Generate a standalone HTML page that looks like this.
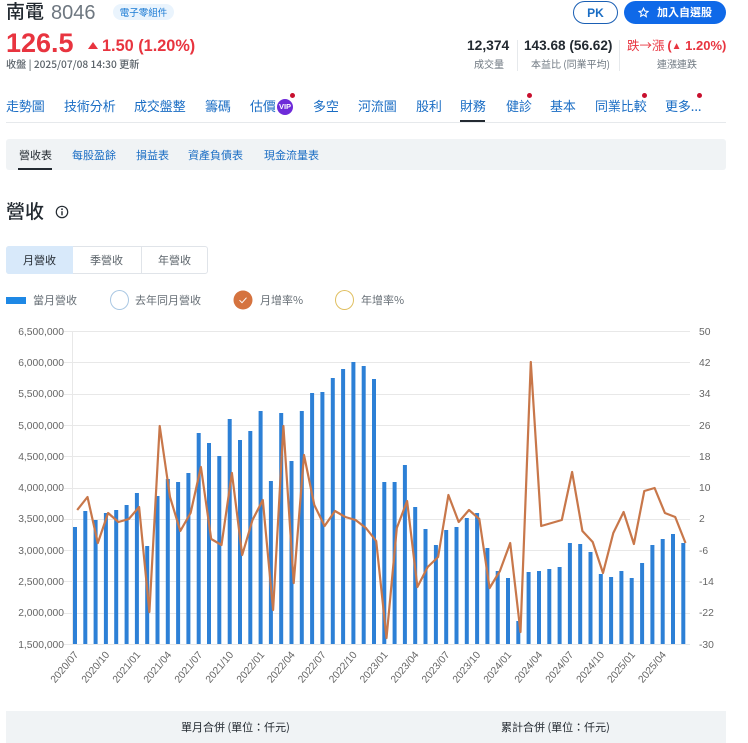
<!DOCTYPE html>
<html lang="zh-Hant"><head><meta charset="utf-8"><title>南電 8046</title>
<style>
html,body{margin:0;padding:0;background:#fff}
body{width:748px;height:743px;position:relative;overflow:hidden;font-family:"Liberation Sans","Noto Sans CJK TC",sans-serif;color:#232a31}
.a{position:absolute;white-space:nowrap;line-height:1}
.c{font-family:"Noto Sans CJK TC",sans-serif}
.n{font-size:13px;color:#1a6dc4;top:99px;font-family:"Noto Sans CJK TC",sans-serif;letter-spacing:-.1px}
.s{font-size:11px;color:#1a6dc4;top:150px;font-family:"Noto Sans CJK TC",sans-serif}
.dot{position:absolute;width:5px;height:5px;border-radius:50%;background:#c8102e;top:93px}
.l{font-size:10px;color:#6e7780;top:59px;font-family:"Noto Sans CJK TC",sans-serif}
.lg{font-size:11px;color:#666e75;top:295px;font-family:"Noto Sans CJK TC",sans-serif}
svg text{font-family:"Liberation Sans",sans-serif;font-size:10.3px;fill:#666}
</style></head><body>
<div class="a c" style="left:6px;top:1px;font-size:19px;font-weight:500">南電</div>
<div class="a" style="left:51px;top:3px;font-size:20px;color:#6e7780">8046</div>
<div class="a c" style="left:113px;top:4px;width:61px;height:16px;border-radius:8px;background:#eaf4fd;color:#1a7ad4;font-size:9.5px;line-height:16px;text-align:center">電子零組件</div>
<div class="a" style="left:6px;top:30px;font-size:27px;font-weight:700;color:#e8343f">126.5</div>
<svg class="a" style="left:88px;top:42px" width="10" height="7"><path d="M5 0L10 7H0z" fill="#e8343f"/></svg>
<div class="a" style="left:102px;top:38px;font-size:16.3px;font-weight:700;color:#e8343f">1.50 (1.20%)</div>
<div class="a c" style="left:6px;top:59px;font-size:10.2px;font-weight:500;color:#5b636a">收盤 | 2025/07/08 14:30 更新</div>

<div class="a" style="left:573px;top:1px;width:43px;height:21px;border:1px solid #1a5fb4;border-radius:12px;text-align:center;line-height:22px;font-size:12px;font-weight:700;color:#1a6dc4">PK</div>
<div class="a" style="left:624px;top:1px;width:102px;height:23px;border-radius:12px;background:#0f69e8"></div>
<svg class="a" style="left:638px;top:7px" width="11" height="11" viewBox="0 0 24 24"><path d="M12 2.5l2.9 6.3 6.9.8-5.1 4.7 1.4 6.8L12 17l-6.1 3.4 1.4-6.8L2.2 9.6l6.9-.8z" fill="none" stroke="#fff" stroke-width="2.4"/></svg>
<div class="a c" style="left:657px;top:7px;font-size:11px;font-weight:700;color:#fff">加入自選股</div>

<div class="a" style="left:467px;top:39px;font-size:13.8px;font-weight:700">12,374</div>
<div class="a l" style="left:474px">成交量</div>
<div class="a" style="left:517px;top:40px;width:1px;height:31px;background:#e6e9ec"></div>
<div class="a" style="left:524px;top:39px;font-size:13.6px;font-weight:700">143.68 (56.62)</div>
<div class="a l" style="left:531px">本益比 (同業平均)</div>
<div class="a" style="left:619px;top:40px;width:1px;height:31px;background:#e6e9ec"></div>
<div class="a c" style="left:627px;top:39px;font-size:12.5px;color:#e8343f">跌→漲 <b style="font-family:'Liberation Sans','Noto Sans CJK TC',sans-serif;font-size:13px">(<span style="font-size:10px;vertical-align:1px">▲</span> 1.20%)</b></div>
<div class="a l" style="left:657px">連漲連跌</div>

<div class="a n" style="left:6px">走勢圖</div>
<div class="a n" style="left:64px">技術分析</div>
<div class="a n" style="left:134px">成交盤整</div>
<div class="a n" style="left:205px">籌碼</div>
<div class="a n" style="left:250px">估價</div>
<div class="a" style="left:277px;top:99px;width:16px;height:16px;border-radius:50%;background:#6e2bd9;color:#fff;font-size:7.5px;font-weight:700;line-height:16px;text-align:center">VIP</div>
<div class="dot" style="left:290px"></div>
<div class="a n" style="left:313px">多空</div>
<div class="a n" style="left:358px">河流圖</div>
<div class="a n" style="left:416px">股利</div>
<div class="a n" style="left:460px;color:#1a6dc4">財務</div>
<div class="a n" style="left:506px">健診</div><div class="dot" style="left:527px"></div>
<div class="a n" style="left:550px">基本</div>
<div class="a n" style="left:595px">同業比較</div><div class="dot" style="left:642px"></div>
<div class="a n" style="left:665px">更多...</div><div class="dot" style="left:697px"></div>
<div class="a" style="left:6px;top:122px;width:720px;height:1px;background:#e6e9ec"></div>
<div class="a" style="left:460px;top:120px;width:25px;height:2px;background:#232a31"></div>

<div class="a" style="left:6px;top:139px;width:720px;height:31px;background:#f0f3f5;border-radius:3px"></div>
<div class="a s" style="left:19px;color:#232a31">營收表</div>
<div class="a" style="left:18px;top:168px;width:34px;height:2px;background:#232a31"></div>
<div class="a s" style="left:72px">每股盈餘</div>
<div class="a s" style="left:136px">損益表</div>
<div class="a s" style="left:188px">資產負債表</div>
<div class="a s" style="left:264px">現金流量表</div>

<div class="a c" style="left:6px;top:201px;font-size:19px;font-weight:500">營收</div>
<svg class="a" style="left:55px;top:205px" width="14" height="14" viewBox="0 0 14 14"><circle cx="7" cy="7" r="5.7" fill="none" stroke="#232a31" stroke-width="1.2"/><path d="M7 6.2V10.3" stroke="#232a31" stroke-width="1.4"/><circle cx="7" cy="4.2" r=".9" fill="#232a31"/></svg>

<div class="a" style="left:6px;top:246px;width:200px;height:26px;border:1px solid #e0e4e9;border-radius:3px"></div>
<div class="a" style="left:6px;top:246px;width:67px;height:28px;background:#d8e9fa;border-radius:3px 0 0 3px"></div>
<div class="a" style="left:141px;top:247px;width:1px;height:26px;background:#e0e4e9"></div>
<div class="a c" style="left:23px;top:255px;font-size:11px;color:#232a31">月營收</div>
<div class="a c" style="left:90px;top:255px;font-size:11px;color:#5b636a">季營收</div>
<div class="a c" style="left:158px;top:255px;font-size:11px;color:#5b636a">年營收</div>

<div class="a" style="left:6px;top:297px;width:20px;height:7px;background:#1e88e5"></div>
<div class="a lg" style="left:33px">當月營收</div>
<div class="a" style="left:110px;top:290px;width:17px;height:18px;border:1px solid #a9c7e3;border-radius:50%"></div>
<div class="a lg" style="left:135px">去年同月營收</div>
<svg class="a" style="left:233px;top:290px" width="20" height="20" viewBox="0 0 20 20"><circle cx="10" cy="10" r="9.5" fill="#d5733f"/><path d="M6.5 10.2l2.5 2.5 4.5-5" fill="none" stroke="#fff" stroke-width="1"/></svg>
<div class="a lg" style="left:260px">月增率%</div>
<div class="a" style="left:335px;top:290px;width:17px;height:18px;border:1px solid #e0bf60;border-radius:50%"></div>
<div class="a lg" style="left:361px">年增率%</div>

<svg class="a" style="left:0;top:320px;overflow:visible" width="748" height="380" viewBox="0 320 748 380">
<path d="M64 331.5H690M64 362.5H690M64 394.5H690M64 425.5H690M64 456.5H690M64 488.5H690M64 519.5H690M64 550.5H690M64 581.5H690M64 613.5H690M64 644.5H690M72.5 331V645" stroke="#e8e8e8" fill="none"/>
<path fill="#2d80d6" d="M73 527h4V644h-4zM83.3 511h4V644h-4zM93.6 520h4V644h-4zM103.9 513h4V644h-4zM114.2 510h4V644h-4zM124.6 505h4V644h-4zM134.9 493h4V644h-4zM145.2 546h4V644h-4zM155.5 496h4V644h-4zM165.8 479h4V644h-4zM176.1 482h4V644h-4zM186.4 473h4V644h-4zM196.7 433h4V644h-4zM207 443h4V644h-4zM217.3 456h4V644h-4zM227.7 419h4V644h-4zM238 440h4V644h-4zM248.3 431h4V644h-4zM258.6 411h4V644h-4zM268.9 481h4V644h-4zM279.2 413h4V644h-4zM289.5 461h4V644h-4zM299.8 411h4V644h-4zM310.1 393h4V644h-4zM320.4 392h4V644h-4zM330.8 378h4V644h-4zM341.1 369h4V644h-4zM351.4 362h4V644h-4zM361.7 366h4V644h-4zM372 379h4V644h-4zM382.3 482h4V644h-4zM392.6 482h4V644h-4zM402.9 465h4V644h-4zM413.2 507h4V644h-4zM423.5 529h4V644h-4zM433.9 545h4V644h-4zM444.2 530h4V644h-4zM454.5 527h4V644h-4zM464.8 518h4V644h-4zM475.1 513h4V644h-4zM485.4 548h4V644h-4zM495.7 571h4V644h-4zM506 578h4V644h-4zM516.3 621h4V644h-4zM526.6 572h4V644h-4zM537 571h4V644h-4zM547.3 569h4V644h-4zM557.6 567h4V644h-4zM567.9 543h4V644h-4zM578.2 544h4V644h-4zM588.5 552h4V644h-4zM598.8 574h4V644h-4zM609.1 577h4V644h-4zM619.4 571h4V644h-4zM629.7 578h4V644h-4zM640.1 563h4V644h-4zM650.4 545h4V644h-4zM660.7 539h4V644h-4zM671 534h4V644h-4zM681.3 543h4V644h-4z"/>
<polyline fill="none" stroke="#c8774a" stroke-width="2.2" stroke-linejoin="round" points="77.2,510 87.5,497 97.8,543 108.1,513 118.4,522 128.8,519 139.1,507 149.4,612 159.7,426 170,497 180.3,531 190.6,513 200.9,467 211.2,539 221.5,545 231.9,473 242.2,555 252.5,520 262.8,500 273.1,610 283.4,426 293.7,583 304,455 314.3,505 324.6,526 335,511 345.3,517 355.6,520 365.9,528 376.2,541 386.5,638 396.8,528 407.1,501 417.4,587 427.7,567 438.1,557 448.4,495 458.7,522 469,510 479.3,519 489.6,588 499.9,571 510.2,543 520.5,632 530.8,362 541.2,526 551.5,523 561.8,520 572.1,472 582.4,531 592.7,542 603,573 613.3,533 623.6,512 633.9,544 644.3,491 654.6,488 664.9,513 675.2,517 685.5,543"/>
<g text-anchor="end">
<text x="64" y="335">6,500,000</text><text x="64" y="366">6,000,000</text><text x="64" y="397">5,500,000</text><text x="64" y="429">5,000,000</text><text x="64" y="460">4,500,000</text><text x="64" y="491">4,000,000</text><text x="64" y="522">3,500,000</text><text x="64" y="554">3,000,000</text><text x="64" y="585">2,500,000</text><text x="64" y="616">2,000,000</text><text x="64" y="648">1,500,000</text>
<text transform="translate(79,655) rotate(-50)">2020/07</text><text transform="translate(110,655) rotate(-50)">2020/10</text><text transform="translate(141,655) rotate(-50)">2021/01</text><text transform="translate(172,655) rotate(-50)">2021/04</text><text transform="translate(203,655) rotate(-50)">2021/07</text><text transform="translate(234,655) rotate(-50)">2021/10</text><text transform="translate(265,655) rotate(-50)">2022/01</text><text transform="translate(295.5,655) rotate(-50)">2022/04</text><text transform="translate(326.4,655) rotate(-50)">2022/07</text><text transform="translate(357.4,655) rotate(-50)">2022/10</text><text transform="translate(388.3,655) rotate(-50)">2023/01</text><text transform="translate(419.2,655) rotate(-50)">2023/04</text><text transform="translate(450.2,655) rotate(-50)">2023/07</text><text transform="translate(481,655) rotate(-50)">2023/10</text><text transform="translate(512,655) rotate(-50)">2024/01</text><text transform="translate(543,655) rotate(-50)">2024/04</text><text transform="translate(573.9,655) rotate(-50)">2024/07</text><text transform="translate(604.8,655) rotate(-50)">2024/10</text><text transform="translate(635.7,655) rotate(-50)">2025/01</text><text transform="translate(666.7,655) rotate(-50)">2025/04</text>
</g>
<text x="699" y="335">50</text><text x="699" y="366">42</text><text x="699" y="397">34</text><text x="699" y="429">26</text><text x="699" y="460">18</text><text x="699" y="491">10</text><text x="699" y="522">2</text><text x="699" y="554">-6</text><text x="699" y="585">-14</text><text x="699" y="616">-22</text><text x="699" y="648">-30</text>
</svg>

<div class="a" style="left:6px;top:711px;width:720px;height:32px;background:#f0f3f5"></div>
<div class="a c" style="left:181px;top:722px;font-size:11px;color:#232a31">單月合併 (單位：仟元)</div>
<div class="a c" style="left:501px;top:722px;font-size:11px;color:#232a31">累計合併 (單位：仟元)</div>
</body></html>
